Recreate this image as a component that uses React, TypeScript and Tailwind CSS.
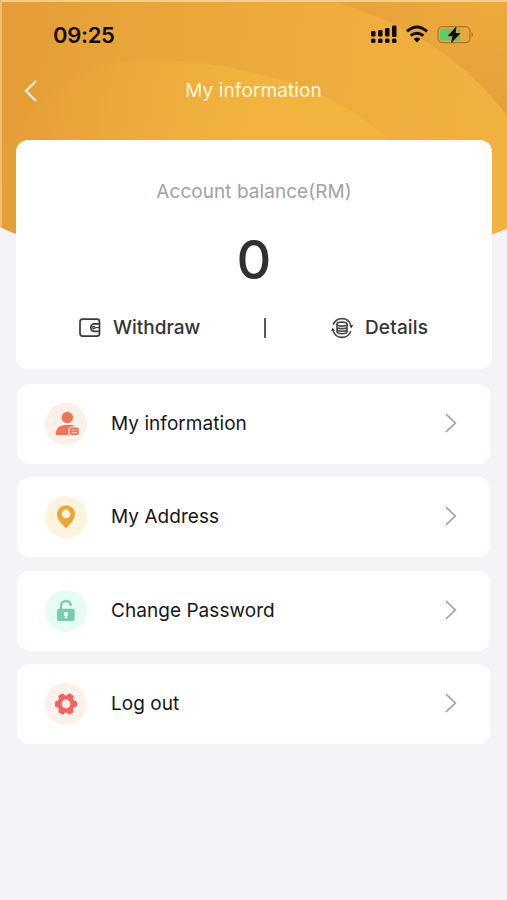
import React from 'react';

interface MenuItem {
    label: string;
    tint: string;
    icon: React.ReactNode;
}

const HeaderBackground: React.FC = () => (
    <svg className="col-start-1 row-start-1 block" width="507" height="245" viewBox="0 0 507 245" aria-hidden="true">
        <defs>
            <linearGradient id="base" x1="0" y1="0" x2="507" y2="60" gradientUnits="userSpaceOnUse">
                <stop offset="0" stopColor="#e59d37" />
                <stop offset="0.45" stopColor="#eba93c" />
                <stop offset="1" stopColor="#f2b23f" />
            </linearGradient>
            <linearGradient id="inner" x1="20" y1="90" x2="250" y2="130" gradientUnits="userSpaceOnUse">
                <stop offset="0" stopColor="#e8a23a" stopOpacity="0" />
                <stop offset="0.5" stopColor="#ecaa3c" />
                <stop offset="1" stopColor="#f2b43e" />
            </linearGradient>
            <linearGradient id="corner" x1="370" y1="30" x2="500" y2="0" gradientUnits="userSpaceOnUse">
                <stop offset="0" stopColor="#e8a43b" />
                <stop offset="1" stopColor="#edab3d" />
            </linearGradient>
            <linearGradient id="cornerFade" x1="500" y1="110" x2="475" y2="5" gradientUnits="userSpaceOnUse">
                <stop offset="0" stopColor="#e5a13b" />
                <stop offset="1" stopColor="#e5a13b" stopOpacity="0" />
            </linearGradient>
            <clipPath id="sheet">
                <path d="M0 0H507V229Q493 234 485 237H24Q10 232 0 227Z" />
            </clipPath>
        </defs>
        <g clipPath="url(#sheet)">
            <rect width="507" height="245" fill="url(#base)" />
            <path d="M0 245V140Q80 56 150 60Q220 60 294 84Q345 101 390 140L460 245Z" fill="url(#inner)" />
            <path d="M334 2Q445 33 507 116V0H334Z" fill="url(#corner)" />
            <path d="M334 2Q445 33 507 116V0H334Z" fill="url(#cornerFade)" />
            <rect width="507" height="2" fill="#f6cd8c" />
            <rect width="2" height="240" fill="#efbd78" />
        </g>
    </svg>
);

const StatusIcons: React.FC = () => (
    <svg width="104" height="24" viewBox="0 0 104 24" aria-hidden="true">
        <g fill="#100b04">
            <rect x="1" y="8" width="4.5" height="5.5" rx="1.2" />
            <rect x="8" y="7" width="4.5" height="6.5" rx="1.2" />
            <rect x="15" y="5" width="4.5" height="8.5" rx="1.2" />
            <rect x="22" y="2.5" width="4.5" height="11.5" rx="1.2" />
            <rect x="1" y="15.5" width="4.5" height="4.5" rx="1.5" />
            <rect x="8" y="15.5" width="4.5" height="4.5" rx="1.5" />
            <rect x="15" y="15.5" width="4.5" height="4.5" rx="1.5" />
            <rect x="22" y="15.5" width="4.5" height="4.5" rx="1.5" />
        </g>
        <g fill="none" stroke="#100b04" strokeWidth="2.9">
            <path d="M37 8.4Q47 -0.4 57 8.4" />
            <path d="M40.6 12.7Q47 7.6 53.4 12.7" />
        </g>
        <path d="M43.7 16Q47 13.2 50.3 16L47 19.6Z" fill="#100b04" />
        <rect x="68" y="3.7" width="32" height="16" rx="4.5" fill="none" stroke="#a6782b" strokeWidth="1.3" />
        <path d="M101.6 9.3Q104.5 11.5 101.6 14.3Z" fill="#a6782b" />
        <path d="M72.5 5.7H90V17.5H72.5Q70 17.5 70 15V8.2Q70 5.7 72.5 5.7Z" fill="#5fcb6b" />
        <path d="M86.6 3L77.5 13.2H82.5L80.8 20.4L90.8 10H85.6Z" fill="#100b04" stroke="#eeb03e" strokeWidth="1" paintOrder="stroke" />
    </svg>
);

const WalletIcon: React.FC = () => (
    <svg width="22" height="20" viewBox="0 0 22 20" fill="none" stroke="#38383a" strokeWidth="1.7" strokeLinejoin="round" aria-hidden="true">
        <rect x="1" y="1.2" width="19.5" height="17" rx="2.6" />
        <path d="M20.5 5.8H14.6A4 4 0 0 0 14.6 13.4H20.5" />
        <circle cx="14.9" cy="9.6" r="1.2" strokeWidth="1.2" />
        <path d="M16.3 9.6H20.5" strokeWidth="1.2" />
    </svg>
);

const CoinsIcon: React.FC = () => (
    <svg width="22" height="22" viewBox="0 0 22 22" fill="none" stroke="#48484a" strokeWidth="1.6" aria-hidden="true">
        <path d="M2.2 7.8A9.4 9.4 0 0 1 19.8 7.7" />
        <path d="M19.8 14.2A9.4 9.4 0 0 1 2.2 14.3" />
        <path d="M18.2 8.2L22 8L20.4 11.4ZM0 13.8L1.8 10.8L4 14Z" fill="#303032" stroke="none" />
        <ellipse cx="11" cy="7.1" rx="5" ry="2" />
        <path d="M6 7.1V14.8C6 17.4 16 17.4 16 14.8V7.1M6 9.7C6 12.2 16 12.2 16 9.7M6 12.3C6 14.8 16 14.8 16 12.3" />
    </svg>
);

const ProfileIcon: React.FC = () => (
    <svg width="42" height="42" viewBox="0 0 42 42" aria-hidden="true">
        <circle cx="22.3" cy="14.5" r="5.8" fill="#ec7659" />
        <path d="M10.8 32Q10.8 22 20 22H26.5Q29 22 29.4 23.4H27.2Q23.5 23.4 23.5 27V32Z" fill="#ec7659" />
        <rect x="24.8" y="24.6" width="9" height="7.4" rx="1.7" fill="#ec7659" />
        <path d="M26.8 27.4H29M30.5 26.8H32M26.6 29.8H32.2" stroke="#fbd9cc" strokeWidth="1.1" />
    </svg>
);

const PinIcon: React.FC = () => (
    <svg width="42" height="42" viewBox="0 0 42 42" aria-hidden="true">
        <path fillRule="evenodd" d="M21 32.3C17.5 28.7 12 23.5 12 18.2A9 9 0 0 1 30 18.2C30 23.5 24.5 28.7 21 32.3ZM21 13.6A4.4 4.4 0 1 0 21 22.4A4.4 4.4 0 0 0 21 13.6Z" fill="#eaa637" />
    </svg>
);

const LockIcon: React.FC = () => (
    <svg width="42" height="42" viewBox="0 0 42 42" aria-hidden="true">
        <path d="M16 19V15.8A4.9 4.9 0 0 1 25.7 15" fill="none" stroke="#79cdae" strokeWidth="2.4" strokeLinecap="round" />
        <rect x="12.1" y="18.8" width="17.5" height="12.3" rx="1.5" fill="#79cdae" />
        <path d="M21 21.8A2.4 2.4 0 0 1 22.1 26.2V28.3H19.9V26.2A2.4 2.4 0 0 1 21 21.8Z" fill="#e9fff6" />
    </svg>
);

const GearIcon: React.FC = () => (
    <svg width="42" height="42" viewBox="0 0 42 42" aria-hidden="true">
        <g fill="#ed6662">
            <circle cx="21" cy="21" r="8.8" />
            <rect x="10" y="17.7" width="22" height="6.6" rx="1.8" />
            <rect x="10" y="17.7" width="22" height="6.6" rx="1.8" transform="rotate(60 21 21)" />
            <rect x="10" y="17.7" width="22" height="6.6" rx="1.8" transform="rotate(120 21 21)" />
        </g>
        <circle cx="21" cy="21" r="4.4" fill="#fef1ec" />
    </svg>
);

const menu: MenuItem[] = [
    { label: 'My information', tint: 'bg-[#fdf0e9]', icon: <ProfileIcon /> },
    { label: 'My Address', tint: 'bg-[#fef3dc]', icon: <PinIcon /> },
    { label: 'Change Password', tint: 'bg-[#e7fdf4]', icon: <LockIcon /> },
    { label: 'Log out', tint: 'bg-[#fef1ec]', icon: <GearIcon /> },
];

const MenuRow: React.FC<{ item: MenuItem }> = ({ item }) => (
    <button className="flex h-20 w-full items-center rounded-xl bg-white pl-7 pr-8 text-left">
        <span className={`flex size-[42px] shrink-0 items-center justify-center rounded-full ${item.tint}`}>{item.icon}</span>
        <span className="ml-6 flex-1 text-[19px] leading-6 tracking-[0.05px] text-[#171717]">{item.label}</span>
        <svg className="mb-0.5" width="14" height="20" viewBox="0 0 14 20" fill="none" stroke="#a3a3a3" strokeWidth="1.7" aria-hidden="true">
            <path d="M2 1.2L11.3 10L2 18.8" />
        </svg>
    </button>
);

export default function App() {
    return (
        <div className="grid h-[900px] w-[507px] grid-cols-1 grid-rows-1 items-start overflow-hidden bg-[#f5f3f7] font-[Inter,sans-serif]">
            <HeaderBackground />

            <div className="z-10 col-start-1 row-start-1 flex flex-col">
                {/* Status bar */}
                <div className="flex h-[70px] items-center justify-between pl-[53px] pr-[33px]">
                    <span className="text-[22px] font-semibold leading-none tracking-[-0.3px] text-[#130d05]">09:25</span>
                    <StatusIcons />
                </div>

                <header className="grid h-[42px] grid-cols-[60px_1fr_60px] items-center">
                    <button className="pl-6" aria-label="Back">
                        <svg width="14" height="22" viewBox="0 0 14 22" fill="none" stroke="#fff5e0" strokeWidth="2" aria-hidden="true">
                            <path d="M12 1L2 11L12 21" />
                        </svg>
                    </button>
                    <h1 className="text-center text-[19px] leading-6 tracking-[0.1px] text-[#fff6de]">My information</h1>
                </header>

                {/* Balance */}
                <section className="ml-4 mr-[15px] mt-7 flex h-[229px] flex-col items-center rounded-xl bg-white">
                    <p className="mt-10 text-[19px] leading-6 tracking-[0.05px] text-[#a2a2a2]">Account balance(RM)</p>
                    <p className="mt-7 text-[54px] font-medium leading-14 text-[#303032]">0</p>
                    <div className="mt-6 flex w-full items-center pl-[63px] text-[19px] font-medium leading-8 text-[#343436]">
                        <button className="flex w-[123px] items-center gap-3">
                            <WalletIcon />
                            Withdraw
                        </button>
                        <span className="ml-[62px] h-5 w-[2px] bg-[#59595b]" />
                        <button className="ml-[65px] flex items-center gap-3 tracking-[0.15px]">
                            <CoinsIcon />
                            Details
                        </button>
                    </div>
                </section>

                <nav className="mx-[17px] mt-[15px] flex flex-col gap-[13.3px]">
                    {menu.map((item) => (
                        <MenuRow key={item.label} item={item} />
                    ))}
                </nav>
            </div>
        </div>
    );
}
